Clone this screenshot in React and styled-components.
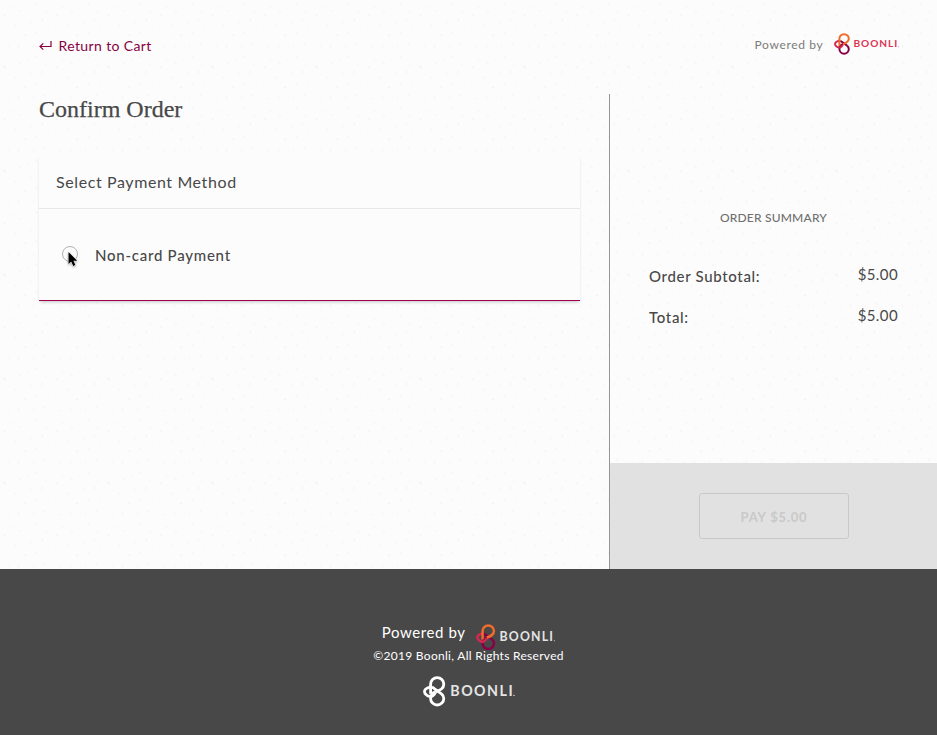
import React from 'react';
import styled, { createGlobalStyle } from 'styled-components';

const speckle = `url("data:image/svg+xml,${encodeURIComponent(
  `<svg xmlns='http://www.w3.org/2000/svg' width='52' height='52'><g stroke='#f5f5f5' stroke-width='1.3' stroke-linecap='round'><path d='M4 14l1.5 2M11 7v.6M19 11l1 .2M27 8h.6M36 4l1 1M46 12l.6 1M43 19l-1.2 2.2M31 22h.7M15 25l1 1.5M6 32v.5M24 35l2 .5M37 32l-.8 1.8M48 30h.5M18 45l1 2M33 46h.8M44 43l1.4 1M8 47l.6-.8'/></g></svg>`
)}")`;

const GlobalStyle = createGlobalStyle`
  * { box-sizing: border-box; }
  body {
    margin: 0;
    background: #fcfcfc;
    color: #484848;
    font-family: Lato, "Open Sans", sans-serif;
  }
`;

const Page = styled.div`
  display: flex;
  flex-direction: column;
  height: 735px;
  overflow: hidden;
`;

const Checkout = styled.div`
  display: flex;
  flex-direction: column;
  height: 569px;
  background: #fcfcfc ${speckle};
`;

const Header = styled.header`
  display: flex;
  justify-content: space-between;
  align-items: flex-start;
  height: 94px;
  padding: 33px 38px 0 39px;
`;

const ReturnLink = styled.a`
  display: flex;
  align-items: center;
  gap: 6.5px;
  margin-top: 3px;
  color: #870042;
  font-size: 14px;
  line-height: 20px;
  letter-spacing: 0.38px;
  text-decoration: none;
`;

const Powered = styled.div`
  display: flex;
  align-items: flex-start;
  gap: ${({ $footer }) => ($footer ? 10 : 10.2)}px;
  font-size: ${({ $footer }) => ($footer ? 15 : 12)}px;
  letter-spacing: ${({ $footer }) => ($footer ? 0.6 : 0.65)}px;
  line-height: ${({ $footer }) => ($footer ? 18 : 24)}px;
  color: ${({ $footer }) => ($footer ? '#fff' : '#7b7b7b')};
`;

const Columns = styled.main`
  display: flex;
  flex: 1;
`;

const Payment = styled.section`
  width: 609px;
  padding: 0 29px 0 39px;
`;

const Title = styled.h1`
  margin: 0 0 31px;
  font: 400 24px/30px "Liberation Serif", serif;
  -webkit-text-stroke: 0.25px currentColor;
`;

const Card = styled.div`
  height: 146px;
  background: #fcfcfc;
  border-bottom: 1px solid #a00050;
  box-shadow: 0 2px 3px -1px rgba(0, 0, 0, 0.22);
`;

const CardTitle = styled.h2`
  margin: 0;
  height: 54px;
  padding: 15px 17px 0;
  border-bottom: 1px solid #e7e7e7;
  font-size: 16px;
  font-weight: 400;
  line-height: 24px;
  letter-spacing: 0.6px;
`;

const Option = styled.label`
  display: flex;
  align-items: center;
  gap: 17px;
  padding: 34px 23px 0;
  font-size: 15px;
  font-weight: 500;
  line-height: 24px;
  letter-spacing: 0.75px;
`;

const Radio = styled.span`
  position: relative;
  width: 16px;
  height: 16px;
  margin-top: -2px;
  border: 1px solid #b2b2b2;
  border-radius: 50%;
`;

const Cursor = styled.svg`
  position: absolute;
  left: 5px;
  top: 5px;
  overflow: visible;
  filter: drop-shadow(0 1px 1px rgba(0, 0, 0, 0.35));
`;

const Summary = styled.aside`
  display: flex;
  flex-direction: column;
  flex: 1;
  border-left: 1px solid #969696;
`;

const SummaryTitle = styled.h2`
  margin: 114px 0 36px;
  text-align: center;
  font-size: 12px;
  font-weight: 500;
  line-height: 20px;
  letter-spacing: 0.2px;
  color: #707070;
`;

const SummaryRow = styled.div`
  display: flex;
  justify-content: space-between;
  height: 41px;
  padding: 0 39px;
  font-size: 15px;
  line-height: 20px;
`;

const RowLabel = styled.span`
  padding-top: 2px;
  font-weight: 500;
  letter-spacing: 0.67px;
`;

const RowValue = styled.span`
  letter-spacing: 0.4px;
`;

const PayBar = styled.div`
  display: flex;
  justify-content: center;
  height: 106px;
  margin-top: auto;
  padding-top: 30px;
  background: #e1e1e1;
`;

const PayButton = styled.button`
  width: 150px;
  height: 46px;
  padding: 2px 0 0 1px;
  border: 1px solid #c9c9c9;
  border-radius: 3px;
  background: transparent;
  color: #c9c9c9;
  font: 700 13px/20px Lato, sans-serif;
  letter-spacing: 0.8px;
`;

const Footer = styled.footer`
  display: flex;
  flex-direction: column;
  align-items: center;
  flex: 1;
  padding-top: 54px;
  background: #484848;
  color: #fff;
`;

const Copyright = styled.p`
  height: 16px;
  margin: -2px 0 12px;
  font-size: 12px;
  line-height: 16px;
  letter-spacing: 0.29px;
`;

const LogoSvg = styled.svg`
  flex: none;
  display: block;
  margin-top: ${({ $offset }) => $offset || 0}px;
`;

function Logo({ width, offset, colors, text }) {
  const [top, left, bottom] = colors;
  return (
    <LogoSvg viewBox="0 0 93 31" width={width} height={width / 3} $offset={offset} role="img" aria-label="Boonli">
      <g transform="scale(.3333)" fill="none" strokeWidth="8.5">
        <path stroke={bottom} d="M27 33L56 54M38 48C28 50 23 58 23 68a20 20 0 1 0 40 0C63 62 61 58 56 54" />
        <path stroke={left} d="M26 31L12 37C2 42 3 50 9 56C16 63 26 65 33 57L38 50" />
        <path stroke={top} d="M23 54V25a20 20 0 1 1 40 0C63 39 51 43 38 48" />
      </g>
      <text x="27.6" y="20.2" textLength="63" fill={text} fontFamily="Lato, sans-serif" fontSize="14.4" fontWeight="700">BOONLI</text>
      <circle cx="92" cy="19.6" r=".7" fill={text} />
    </LogoSvg>
  );
}

const brand = ['#f36b2b', '#d52850', '#870047'];
const white = ['#fff', '#fff', '#fff'];

export default function App() {
  return (
    <>
      <GlobalStyle />
      <Page>
        <Checkout>
          <Header>
            <ReturnLink>
              <svg width="13" height="10" viewBox="0 0 13 10" fill="none" stroke="#870042" strokeWidth="1.2">
                <path d="M12 0v5.5H1M4.3 2.4L1 5.5l3.3 3.1" />
              </svg>
              Return to Cart
            </ReturnLink>
            <Powered>
              Powered by
              <Logo width={65.5} offset={0} colors={brand} text="#dc3554" />
            </Powered>
          </Header>
          <Columns>
            <Payment>
              <Title>Confirm Order</Title>
              <Card>
                <CardTitle>Select Payment Method</CardTitle>
                <Option>
                  <Radio>
                    <Cursor width="10" height="15" viewBox="0 0 10 15">
                      <path d="M.5 0v12l2.7-2.5 2 4.6 2.2-1-2-4.4h3.8z" fill="#000" stroke="#fff" strokeWidth=".8" paintOrder="stroke" />
                    </Cursor>
                  </Radio>
                  Non-card Payment
                </Option>
              </Card>
            </Payment>
            <Summary>
              <SummaryTitle>ORDER SUMMARY</SummaryTitle>
              <SummaryRow>
                <RowLabel>Order Subtotal:</RowLabel>
                <RowValue>$5.00</RowValue>
              </SummaryRow>
              <SummaryRow>
                <RowLabel>Total:</RowLabel>
                <RowValue>$5.00</RowValue>
              </SummaryRow>
              <PayBar>
                <PayButton disabled>PAY $5.00</PayButton>
              </PayBar>
            </Summary>
          </Columns>
        </Checkout>
        <Footer>
          <Powered $footer>
            Powered by
            <Logo width={79.5} offset={0.5} colors={brand} text="#e4e4e4" />
          </Powered>
          <Copyright>©2019 Boonli, All Rights Reserved</Copyright>
          <Logo width={92} colors={white} text="#e4e4e4" />
        </Footer>
      </Page>
    </>
  );
}
